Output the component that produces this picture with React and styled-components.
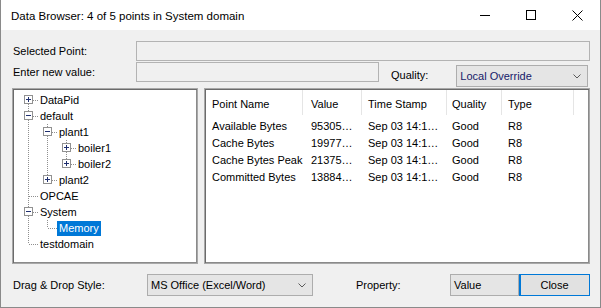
import React from 'react';
import styled, { createGlobalStyle } from 'styled-components';

const Global = createGlobalStyle`
  html, body { margin: 0; padding: 0; background: #fff; }
  body { font-family: "Liberation Sans", Arial, sans-serif; font-size: 11px; color: #000; }
  * { box-sizing: border-box; }
`;

const Window = styled.div`
  width: 601px;
  height: 308px;
  border: 1px solid #8a8a8a;
  border-top: none;
  display: flex;
  flex-direction: column;
  background: #f0f0f0;
`;

const TitleBar = styled.div`
  height: 30px;
  flex: none;
  background: #fff;
  display: flex;
  align-items: center;
`;

const TitleText = styled.div`
  flex: 1;
  padding-left: 10px;
  font-size: 11.5px;
  padding-top: 1px;
`;

const CaptionBtn = styled.div`
  width: 46px;
  height: 30px;
  display: flex;
  align-items: center;
  justify-content: center;
`;

const Client = styled.div`
  flex: 1;
  display: flex;
  flex-direction: column;
  padding: 11px 10px 0 11px;
`;

const FieldRow = styled.div`
  display: flex;
  align-items: ${p => (p.$top ? 'flex-start' : 'center')};
  height: ${p => p.$h}px;
  margin-top: ${p => p.$mt || 0}px;
  flex: none;
`;

const Label = styled.div`
  width: ${p => (p.$w ? `${p.$w}px` : 'auto')};
  margin-left: ${p => p.$ml || 0}px;
  margin-top: ${p => p.$mt || 0}px;
  flex: none;
  line-height: 20px;
  padding-left: 1px;
`;

const Field = styled.div`
  height: 20px;
  width: ${p => (p.$w ? `${p.$w}px` : 'auto')};
  flex: ${p => (p.$w ? 'none' : '1')};
  border: 1px solid #b3b3b3;
  background: #f0f0f0;
`;

const Combo = styled.div`
  width: ${p => p.$w}px;
  height: 22px;
  margin-top: ${p => p.$mt || 0}px;
  margin-left: ${p => p.$ml || 0}px;
  flex: none;
  border: 1px solid #adadad;
  background: #e5e5e5;
  display: flex;
  align-items: center;
  padding: 0 6px 0 3px;
  color: ${p => p.$color || '#000'};
`;

const ComboText = styled.span`
  flex: 1;
`;

const Panels = styled.div`
  display: flex;
  gap: 6px;
  height: 176px;
  margin-top: 1px;
  flex: none;
`;

const Sunken = styled.div`
  border: 1px solid #a8a8a8;
  box-shadow: inset 1px 1px 0 #6b6b6b, inset -1px -1px 0 #8a8a8a;
  background: #fff;
  padding: 1px;
  width: ${p => (p.$w ? `${p.$w}px` : 'auto')};
  flex: ${p => (p.$w ? 'none' : '1')};
  overflow: hidden;
`;

const TreeList = styled.div`
  display: flex;
  flex-direction: column;
  padding: 2px 0 0 5px;
`;

const TreeRow = styled.div`
  display: flex;
  height: 16px;
  align-items: center;
`;

const dotV = 'repeating-linear-gradient(to bottom, #8f8f8f 0 1px, transparent 1px 2px)';
const dotH = 'repeating-linear-gradient(to right, #8f8f8f 0 1px, transparent 1px 2px)';

const guideLayers = p => {
  const l = [];
  if (p.$up) l.push([dotV, '1px 8px', '9px 0']);
  if (p.$down) l.push([dotV, '1px 8px', '9px 8px']);
  if (p.$right) l.push([dotH, '9px 1px', '10px 8px']);
  return l;
};

const Guide = styled.span`
  width: 19px;
  height: 16px;
  flex: none;
  display: flex;
  align-items: center;
  padding-left: 5px;
  background-repeat: no-repeat;
  background-image: ${p => guideLayers(p).map(x => x[0]).join(', ') || 'none'};
  background-size: ${p => guideLayers(p).map(x => x[1]).join(', ') || 'auto'};
  background-position: ${p => guideLayers(p).map(x => x[2]).join(', ') || '0 0'};
`;

const Expander = styled.span`
  width: 9px;
  height: 9px;
  border: 1px solid #919191;
  background: #fff;
  display: block;
  margin-top: -1px;
`;

const NodeLabel = styled.span`
  height: 15px;
  line-height: 15px;
  padding: 0 2px 0 2px;
  background: ${p => (p.$sel ? '#0078d7' : 'transparent')};
  color: ${p => (p.$sel ? '#fff' : '#000')};
  white-space: nowrap;
`;

const Grid = styled.div`
  display: grid;
  grid-template-columns: 97px 59px 85px 55px 72px;
`;

const HeadCell = styled.div`
  height: 25px;
  line-height: 28px;
  padding-left: ${p => p.$pl || 6}px;
  border-right: 1px solid #e5e5e5;
  white-space: nowrap;
`;

const Rows = styled.div`
  padding-top: 2px;
`;

const Cell = styled.div`
  height: 17px;
  line-height: 18px;
  padding-left: ${p => p.$pl || 6}px;
  white-space: nowrap;
  overflow: hidden;
`;

const Bottom = styled.div`
  display: flex;
  align-items: center;
  height: 22px;
  margin-top: 10px;
  flex: none;
`;

const ValueBox = styled.div`
  width: 69px;
  height: 22px;
  margin-left: auto;
  flex: none;
  border: 1px solid #adadad;
  background: #e5e5e5;
  padding-left: 3px;
  line-height: 20px;
`;

const Button = styled.div`
  width: 71px;
  height: 22px;
  flex: none;
  border: 1px solid #0078d7;
  box-shadow: inset 1px 0 0 #0078d7;
  background: #e1e1e1;
  text-align: center;
  line-height: 20px;
`;

const Chevron = () => (
  <svg width="8" height="5" viewBox="0 0 8 5">
    <polyline points="0.5,0.5 4,4 7.5,0.5" fill="none" stroke="#5a5a5a" strokeWidth="1" />
  </svg>
);

const Box = ({ plus }) => (
  <Expander>
    <svg width="7" height="7" viewBox="0 0 7 7" style={{ display: 'block' }}>
      <line x1="1" y1="3.5" x2="6" y2="3.5" stroke="#1f2f6f" strokeWidth="1" />
      {plus && <line x1="3.5" y1="1" x2="3.5" y2="6" stroke="#1f2f6f" strokeWidth="1" />}
    </svg>
  </Expander>
);

const tree = [
  { label: 'DataPid', g: [{ down: 1, right: 1, box: '+' }] },
  { label: 'default', g: [{ up: 1, down: 1, right: 1, box: '-' }] },
  { label: 'plant1', g: [{ up: 1, down: 1 }, { up: 1, down: 1, right: 1, box: '-' }] },
  { label: 'boiler1', g: [{ up: 1, down: 1 }, { up: 1, down: 1 }, { up: 1, down: 1, right: 1, box: '+' }] },
  { label: 'boiler2', g: [{ up: 1, down: 1 }, { up: 1, down: 1 }, { up: 1, right: 1, box: '+' }] },
  { label: 'plant2', g: [{ up: 1, down: 1 }, { up: 1, right: 1, box: '+' }] },
  { label: 'OPCAE', g: [{ up: 1, down: 1, right: 1 }] },
  { label: 'System', g: [{ up: 1, down: 1, right: 1, box: '-' }] },
  { label: 'Memory', sel: true, g: [{ up: 1, down: 1 }, { up: 1, right: 1 }] },
  { label: 'testdomain', g: [{ up: 1, right: 1 }] },
];

const cols = [
  { name: 'Point Name', pl: 6 },
  { name: 'Value', pl: 8 },
  { name: 'Time Stamp', pl: 6 },
  { name: 'Quality', pl: 5 },
  { name: 'Type', pl: 6 },
];

const data = [
  ['Available Bytes', '95305…', 'Sep 03 14:1…', 'Good', 'R8'],
  ['Cache Bytes', '19977…', 'Sep 03 14:1…', 'Good', 'R8'],
  ['Cache Bytes Peak', '21375…', 'Sep 03 14:1…', 'Good', 'R8'],
  ['Committed Bytes', '13884…', 'Sep 03 14:1…', 'Good', 'R8'],
];

export default function App() {
  return (
    <>
      <Global />
      <Window>
        <TitleBar>
          <TitleText>Data Browser: 4 of 5 points in System domain</TitleText>
          <CaptionBtn>
            <svg width="10" height="10" viewBox="0 0 10 10">
              <line x1="0" y1="5.5" x2="10" y2="5.5" stroke="#000" strokeWidth="1" />
            </svg>
          </CaptionBtn>
          <CaptionBtn>
            <svg width="10" height="10" viewBox="0 0 10 10">
              <rect x="0.5" y="0.5" width="9" height="9" fill="none" stroke="#000" strokeWidth="1" />
            </svg>
          </CaptionBtn>
          <CaptionBtn>
            <svg width="11" height="11" viewBox="0 0 11 11">
              <path d="M0.5 0.5 L10.5 10.5 M10.5 0.5 L0.5 10.5" stroke="#000" strokeWidth="1" />
            </svg>
          </CaptionBtn>
        </TitleBar>
        <Client>
          <FieldRow $h={20}>
            <Label $w={124}>Selected Point:</Label>
            <Field />
          </FieldRow>
          <FieldRow $h={25} $mt={1} $top>
            <Label $w={124}>Enter new value:</Label>
            <Field $w={243} />
            <Label $ml={11} $mt={3}>Quality:</Label>
            <Combo $w={132} $ml={28} $mt={3} $color="#161a6a">
              <ComboText>Local Override</ComboText>
              <Chevron />
            </Combo>
          </FieldRow>
          <Panels>
            <Sunken $w={186}>
              <TreeList>
                {tree.map(n => (
                  <TreeRow key={n.label}>
                    {n.g.map((c, i) => (
                      <Guide key={i} $up={c.up} $down={c.down} $right={c.right}>
                        {c.box && <Box plus={c.box === '+'} />}
                      </Guide>
                    ))}
                    <NodeLabel $sel={n.sel}>{n.label}</NodeLabel>
                  </TreeRow>
                ))}
              </TreeList>
            </Sunken>
            <Sunken>
              <Grid>
                {cols.map(c => (
                  <HeadCell key={c.name} $pl={c.pl}>{c.name}</HeadCell>
                ))}
              </Grid>
              <Rows>
                {data.map(r => (
                  <Grid key={r[0]}>
                    {r.map((v, i) => (
                      <Cell key={i} $pl={cols[i].pl}>{v}</Cell>
                    ))}
                  </Grid>
                ))}
              </Rows>
            </Sunken>
          </Panels>
          <Bottom>
            <Label $w={135}>Drag &amp; Drop Style:</Label>
            <Combo $w={166}>
              <ComboText>MS Office (Excel/Word)</ComboText>
              <Chevron />
            </Combo>
            <Label $ml={42}>Property:</Label>
            <ValueBox>Value</ValueBox>
            <Button>Close</Button>
          </Bottom>
        </Client>
      </Window>
    </>
  );
}
